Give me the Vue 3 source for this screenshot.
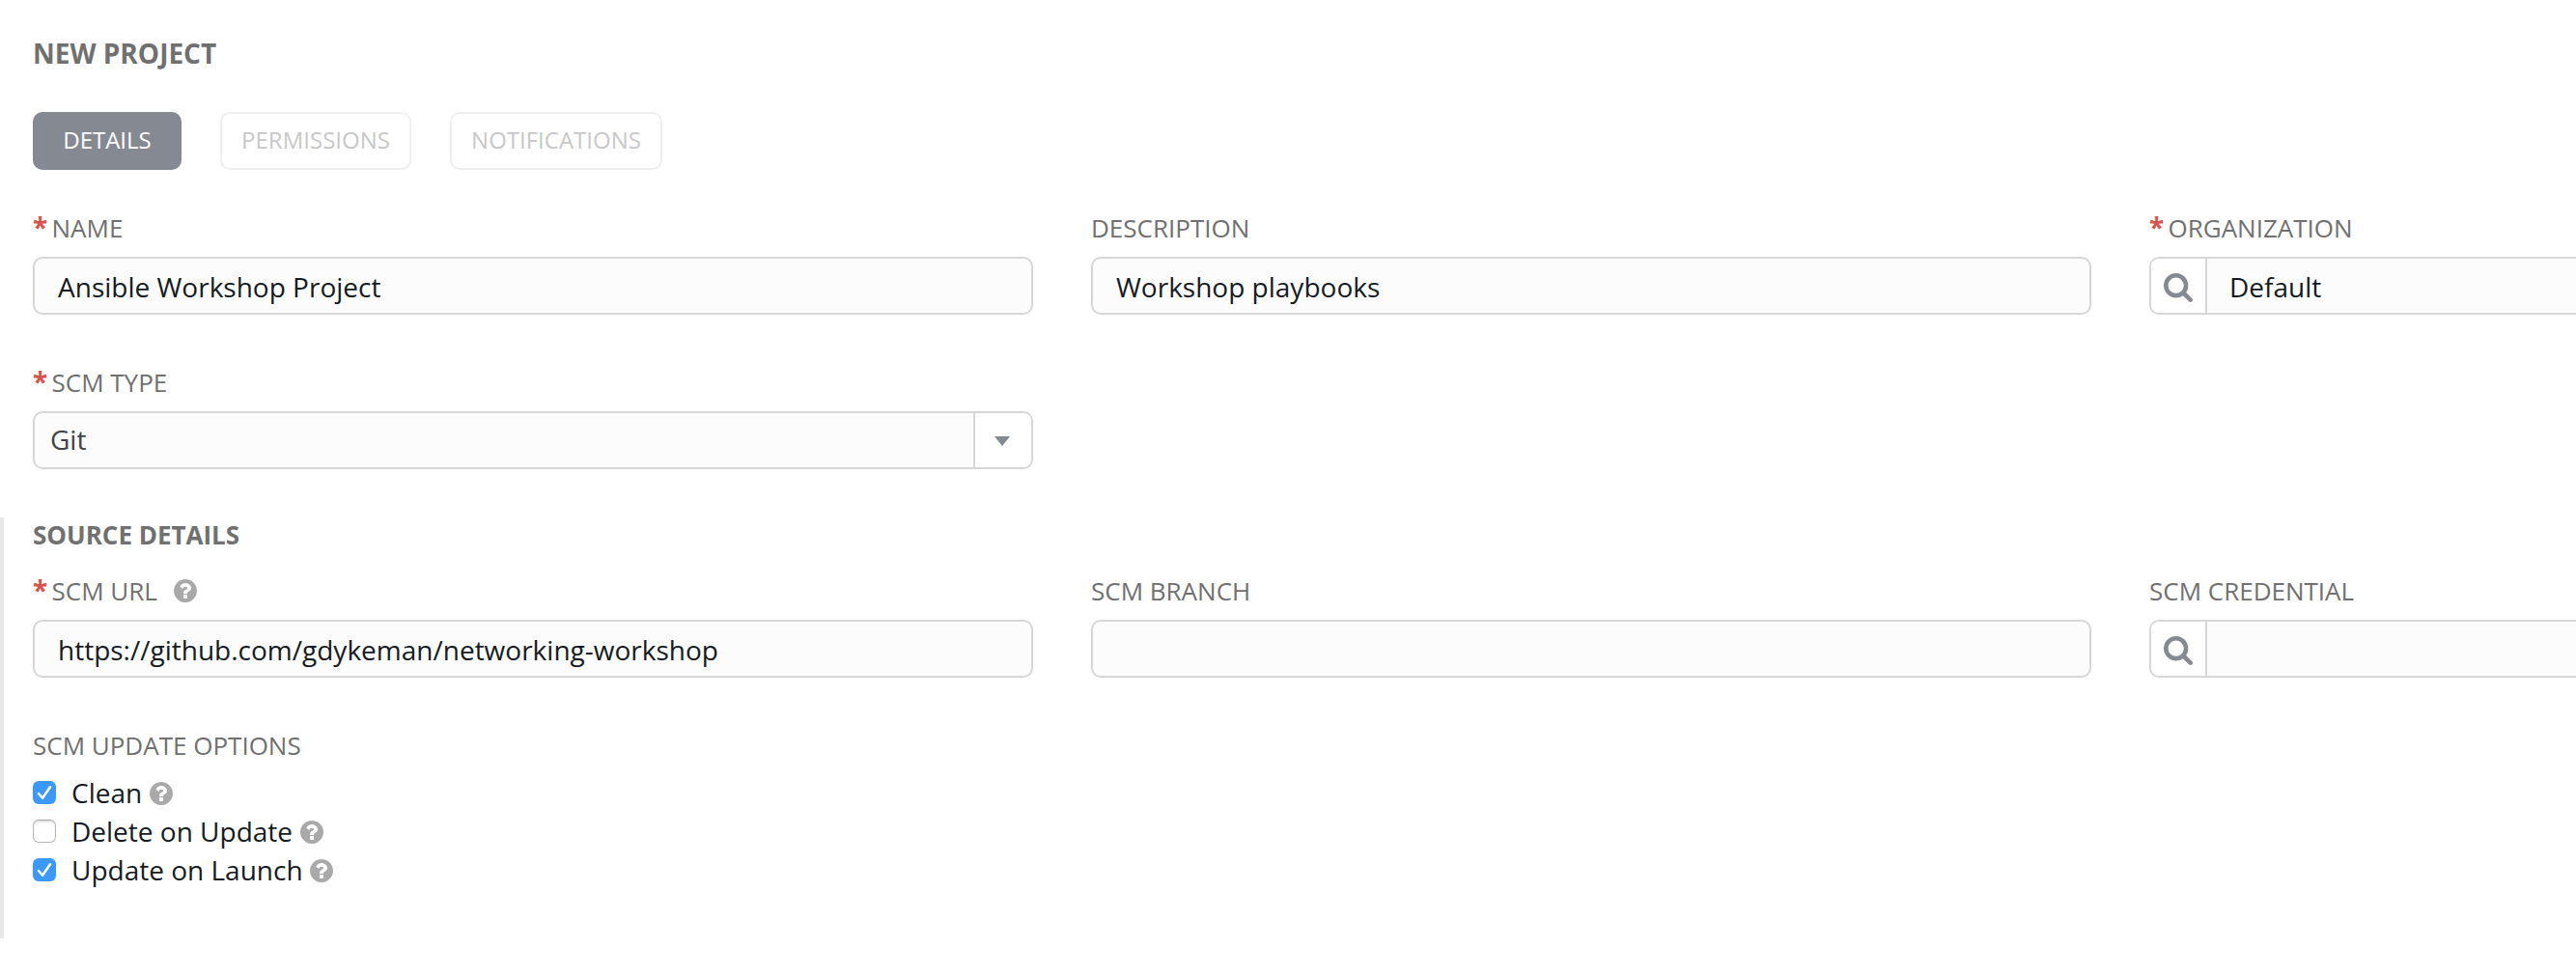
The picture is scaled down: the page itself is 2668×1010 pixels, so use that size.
<script setup>
import { h } from 'vue'

const tabs = [
  { label: 'DETAILS', active: true, width: 154 },
  { label: 'PERMISSIONS', active: false, width: 198 },
  { label: 'NOTIFICATIONS', active: false, width: 220 },
]

const mainFields = [
  { label: 'NAME', required: true, value: 'Ansible Workshop Project' },
  { label: 'DESCRIPTION', value: 'Workshop playbooks' },
  { label: 'ORGANIZATION', required: true, lookup: true, value: 'Default' },
  { label: 'SCM TYPE', required: true, select: true, value: 'Git' },
]

const sourceFields = [
  { label: 'SCM URL', required: true, help: true, value: 'https://github.com/gdykeman/networking-workshop' },
  { label: 'SCM BRANCH', value: '' },
  { label: 'SCM CREDENTIAL', lookup: true, value: '' },
]

const options = [
  { label: 'Clean', checked: true },
  { label: 'Delete on Update', checked: false },
  { label: 'Update on Launch', checked: true },
]

const HelpIcon = () =>
  h('svg', { width: 24, height: 24, viewBox: '128 128 1536 1536', fill: '#a9a9a9' }, [
    h('path', {
      d: 'M1024 1376v-192q0-14-9-23t-23-9h-192q-14 0-23 9t-9 23v192q0 14 9 23t23 9h192q14 0 23-9t9-23zm256-672q0-88-55.5-163t-138.5-116-170-41q-243 0-371 213-15 24 8 42l132 100q7 6 19 6 16 0 25-12 53-68 86-92 34-24 86-24 48 0 85.5 26t37.5 59q0 38-20 61t-68 45q-63 28-115.5 86.5t-52.5 125.5v36q0 14 9 23t23 9h192q14 0 23-9t9-23q0-19 21.5-49.5t54.5-49.5q32-18 49-28.5t46-35 44.5-48 28-60.5 12.5-81zm384 192q0 209-103 385.5t-279.5 279.5-385.5 103-385.5-103-279.5-279.5-103-385.5 103-385.5 279.5-279.5 385.5-103 385.5 103 279.5 279.5 103 385.5z',
    }),
  ])

const Field = ({ field }) =>
  h('div', { class: 'field' }, [
    h('div', { class: 'label' }, [
      field.required ? h('span', { class: 'star' }, '*') : null,
      h('span', field.label),
      field.help ? h(HelpIcon, { class: 'label-help' }) : null,
    ]),
    h('div', { class: ['control', { picker: field.select }] }, [
      field.lookup
        ? h('span', { class: 'lookup' }, [
            h('svg', { width: 30, height: 30, viewBox: '0 128 1664 1664', fill: '#848992' }, [
              h('path', {
                d: 'M1152 832q0-185-131.5-316.5t-316.5-131.5-316.5 131.5-131.5 316.5 131.5 316.5 316.5 131.5 316.5-131.5 131.5-316.5zm512 832q0 52-38 90t-90 38q-54 0-90-38l-343-342q-179 124-399 124-143 0-273.5-55.5t-225-150-150-225-55.5-273.5 55.5-273.5 150-225 225-150 273.5-55.5 273.5 55.5 225 150 150 225 55.5 273.5q0 220-124 399l343 343q37 37 37 90z',
              }),
            ]),
          ])
        : null,
      h('span', { class: 'value' }, field.value),
      field.select
        ? h('span', { class: 'arrow' }, [
            h('svg', { width: 16, height: 10, viewBox: '0 0 16 10', fill: '#848992' }, [
              h('path', { d: 'M0 0H16L8 10Z' }),
            ]),
          ])
        : null,
    ]),
  ])
Field.props = ['field']
</script>

<template>
  <main class="page">
    <h1 class="title">NEW PROJECT</h1>
    <nav class="tabs">
      <span v-for="t in tabs" :key="t.label" class="tab" :class="{ active: t.active }" :style="{ width: t.width + 'px' }">{{ t.label }}</span>
    </nav>
    <div class="grid main-grid">
      <Field v-for="f in mainFields" :key="f.label" :field="f" />
    </div>
    <section class="source">
      <h2 class="subtitle">SOURCE DETAILS</h2>
      <div class="grid">
        <Field v-for="f in sourceFields" :key="f.label" :field="f" />
      </div>
      <div class="options-label">SCM UPDATE OPTIONS</div>
      <div v-for="o in options" :key="o.label" class="option">
        <span class="box" :class="{ checked: o.checked }">
          <svg v-if="o.checked" width="24" height="24" viewBox="0 0 24 24" fill="none" stroke="#fff" stroke-width="2.5" stroke-linecap="round" stroke-linejoin="round">
            <path d="M6 13L10 17.8L18 6.2" />
          </svg>
        </span>
        <span class="option-text">{{ o.label }}</span>
        <HelpIcon class="option-help" />
      </div>
    </section>
  </main>
</template>

<style>
body {
  background: #fff;
}
.field {
  display: flex;
  flex-direction: column;
  gap: 10px;
}
.label {
  display: flex;
  align-items: center;
  height: 40px;
  font-size: 26px;
  line-height: 40px;
  color: #707070;
}
.star {
  width: 19.5px;
  font-size: 28px;
  font-weight: 700;
  line-height: 38px;
  padding-bottom: 2px;
  color: #d9534f;
}
.label-help {
  margin-left: 17.5px;
}
.control {
  display: flex;
  box-sizing: border-box;
  height: 60px;
  border: 2px solid #d7d7d7;
  border-radius: 10px;
  background: #fcfcfc;
  overflow: hidden;
}
.value {
  flex: 1;
  padding: 1px 24px 0;
  font-size: 28px;
  line-height: 56px;
  color: #161b1f;
}
.lookup {
  display: flex;
  justify-content: center;
  box-sizing: border-box;
  width: 58px;
  padding: 15px 0 0;
  border-right: 2px solid #d7d7d7;
  background: #fff;
}
.lookup + .value {
  padding-left: 23px;
}
.picker .value {
  padding: 0 16px;
  line-height: 54px;
  color: #404446;
}
.arrow {
  display: flex;
  align-items: center;
  box-sizing: border-box;
  width: 60px;
  padding: 2px 0 0 20px;
  border-left: 2px solid #d7d7d7;
  background: #fff;
}
</style>

<style scoped>
.page {
  box-sizing: border-box;
  width: 2668px;
  height: 1010px;
  padding-top: 35px;
  overflow: hidden;
  font-family: "Open Sans", sans-serif;
  background: #fff;
}
.title {
  margin: 0 0 0 34px;
  font-size: 28px;
  font-weight: 700;
  line-height: 40px;
  color: #707070;
}
.tabs {
  display: flex;
  gap: 40px;
  margin: 41px 0 40px 34px;
}
.tab {
  box-sizing: border-box;
  height: 60px;
  border: 2px solid #efefef;
  border-radius: 10px;
  font-size: 24px;
  line-height: 54px;
  text-align: center;
  color: #c8c8c8;
}
.tab.active {
  border-color: #848992;
  background: #848992;
  color: #fff;
}
.grid {
  display: grid;
  grid-template-columns: repeat(3, 1036px);
  gap: 50px 60px;
}
.main-grid {
  margin: 0 0 50px 34px;
}
.source {
  box-sizing: border-box;
  height: 436px;
  padding-left: 30px;
  border-left: 4px solid #e8e8e8;
}
.subtitle {
  margin: 0 0 20px;
  font-size: 26px;
  font-weight: 700;
  line-height: 36px;
  color: #707070;
}
.options-label {
  margin: 50px 0 9px;
  font-size: 26px;
  line-height: 40px;
  color: #707070;
}
.option {
  display: flex;
  align-items: center;
  height: 40px;
  font-size: 28px;
  line-height: 40px;
  color: #161b1f;
}
.box {
  box-sizing: border-box;
  width: 24px;
  height: 24px;
  margin-right: 16px;
  border: 1px solid #b8b8b8;
  border-top-color: #a0a0a0;
  border-radius: 6px;
  background: #fff;
  box-shadow: inset 0 2px 2px #e4e4e4;
}
.box.checked {
  border: 0;
  background: #3b99fc;
  box-shadow: none;
}
.box svg {
  display: block;
}
.option-help {
  margin: 2px 0 0 7.8px;
}
</style>
